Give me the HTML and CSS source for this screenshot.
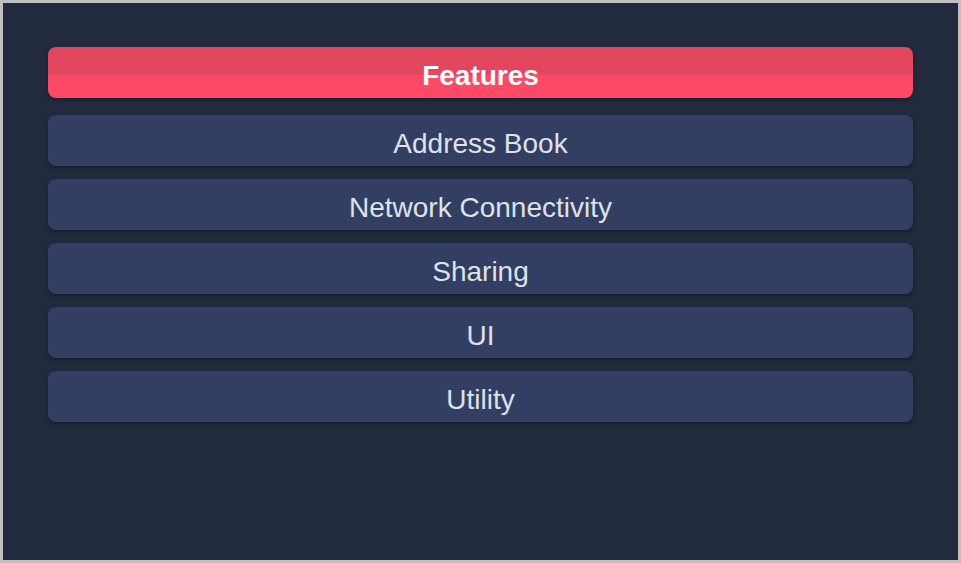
FILE: index.html
```html
<!DOCTYPE html>
<html lang="en">
<head>
    <meta charset="UTF-8">
    <meta name="viewport" content="width=device-width, initial-scale=1.0">
    <title>Features</title>
    <link rel="stylesheet" href="styles.css">
</head>
<body>
    <div class="frame">
        <div class="menu">
            <div class="menu-title">Features</div>
            <div class="menu-item">Address Book</div>
            <div class="menu-item">Network Connectivity</div>
            <div class="menu-item">Sharing</div>
            <div class="menu-item">UI</div>
            <div class="menu-item">Utility</div>
        </div>
    </div>
</body>
</html>
```

FILE: styles.css
```css
* {
    box-sizing: border-box;
    font-family: 'Liberation Sans', Arial, sans-serif;
}

html, body {
    margin: 0;
    height: 100%;
}

body {
    background-color: #bfbfbf;
    padding: 3px;
}

.frame {
    height: 100%;
    background-color: #222a3e;
    padding: 44px 45px;
}

.menu {
    display: flex;
    flex-direction: column;
    gap: 13px;
}

.menu-title,
.menu-item {
    height: 51px;
    border-radius: 8px;
    display: flex;
    align-items: center;
    justify-content: center;
    padding-top: 6px;
    font-size: 28px;
    box-shadow: 0 2px 4px rgba(0, 0, 0, 0.35);
}

.menu-title {
    margin-bottom: 4px;
    background: linear-gradient(to bottom, #e3465f 0, #e3465f 28px, #fe4966 28px, #fe4966 100%);
    color: #ffffff;
    font-weight: bold;
}

.menu-item {
    background-color: #323f63;
    color: #dfe2ea;
}
```
